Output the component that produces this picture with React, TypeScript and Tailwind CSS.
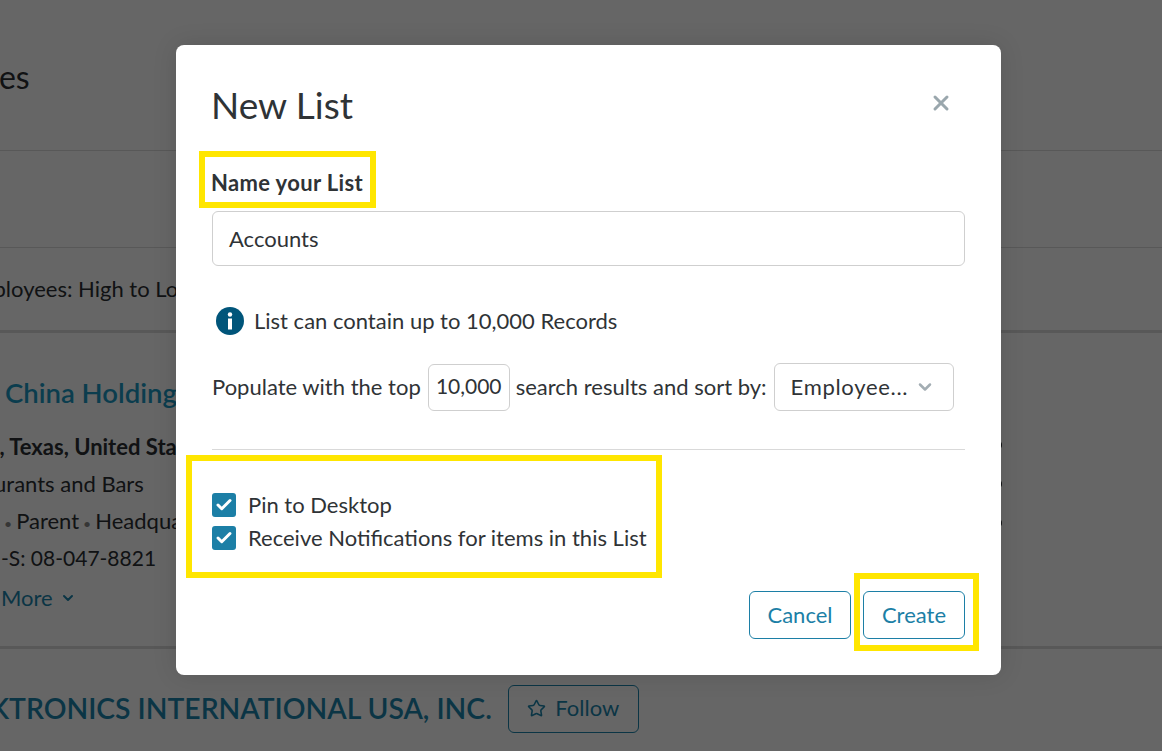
import { Check, ChevronDown, Star, X } from "lucide-react";

function Background() {
  return (
    <div className="h-[751px] overflow-hidden bg-white text-[#2b2f33] text-[22px]">
      <header className="h-[151px] border-b border-[#dcdcdc] pt-[52px]">
        <h1 className="-ml-[126px] text-[32px] leading-[50px]">Companies</h1>
      </header>
      <div className="h-[97px] border-b border-[#dcdcdc]"></div>
      <div className="h-[85px] border-b-[3px] border-[#dcdcdc] pt-[25px]">
        <p className="-ml-[37px] leading-[32px] whitespace-nowrap">Employees: High to Low</p>
      </div>
      <section className="h-[316px] border-b-[3px] border-[#dcdcdc] flex justify-between">
        <div className="pt-[42px]">
          <h2 className="ml-[5px] text-[27.5px] leading-[36px] font-semibold text-[#1c9ac4] whitespace-nowrap">China Holdings</h2>
          <p className="-ml-[60px] mt-[17px] leading-[37px] font-bold whitespace-nowrap">Dallas, Texas, United States</p>
          <p className="-ml-[59px] leading-[37px] whitespace-nowrap">Restaurants and Bars</p>
          <p className="leading-[37px] whitespace-nowrap">
            <span className="mx-[4px] text-[14px] leading-none text-[#888]">•</span>Parent<span className="mx-[4px] text-[14px] leading-none text-[#888]">•</span>Headquarters
          </p>
          <p className="-ml-[62px] text-[21px] leading-[37px] whitespace-nowrap">D-U-N-S: 08-047-8821</p>
          <p className="ml-[1px] mt-[3px] leading-[37px] text-[#1c86ad] flex items-center gap-[7px]">
            More <ChevronDown className="w-[16px] h-[16px]" strokeWidth={3} />
          </p>
        </div>
        <div className="pt-[108px] mr-[160px] flex flex-col gap-[31px]">
          <span className="w-[14px] h-[8px] rounded bg-[#2b2f33]"></span>
          <span className="w-[14px] h-[8px] rounded bg-[#2b2f33]"></span>
          <span className="w-[14px] h-[8px] rounded bg-[#2b2f33]"></span>
        </div>
      </section>
      <section className="flex items-start gap-4 pt-[36px]">
        <h2 className="-ml-[10px] text-[28.3px] leading-[46px] font-semibold text-[#1c86ad] whitespace-nowrap">KTRONICS INTERNATIONAL USA, INC.</h2>
        <button className="w-[131px] h-[48px] pb-[4px] rounded-md border border-[#1c86ad] text-[#1c86ad] flex items-center justify-center gap-[9px]">
          <Star className="w-[19px] h-[19px] mt-[3px]" strokeWidth={2} /> Follow
        </button>
      </section>
    </div>
  );
}

function CheckItem({ label }: { label: string }) {
  return (
    <label className="flex items-center h-[33px]">
      <span className="w-[24px] h-[24px] rounded-[3px] bg-[#1c7fa6] flex items-center justify-center">
        <Check className="w-[18px] h-[18px] text-white" strokeWidth={4} />
      </span>
      <span className="ml-[12px]">{label}</span>
    </label>
  );
}

function Highlight({ className }: { className: string }) {
  return <div className={`absolute border-[6px] border-[#ffe600] pointer-events-none ${className}`}></div>;
}

export default function App() {
  return (
    <div className="relative font-['Lato','Liberation_Sans',sans-serif]">
      <Background />
      <div className="absolute inset-0 bg-black/60 pt-[45px] pl-[176px]">
        <div className="relative w-[825px] h-[630px] bg-white rounded-lg shadow-[0_0_24px_rgba(0,0,0,0.12)] px-[36px] text-[#2f3336] text-[22px]">
          <div className="flex justify-between items-start pt-[35px]">
            <h1 className="-ml-px text-[37px] leading-[50px]">New List</h1>
            <X className="w-[24px] h-[24px] mt-[11px] mr-[12px] text-[#9aa7ad]" strokeWidth={3} />
          </div>
          <p className="mt-[38px] -ml-px font-bold leading-[30px] tracking-[0.35px]">Name your List</p>
          <div className="mt-[13px] h-[55px] border border-[#cfcfcf] rounded-md px-[16px] flex items-center">Accounts</div>
          <div className="mt-[40px] flex items-center h-[30px] pl-[4px]">
            <svg viewBox="0 0 28 28" className="w-[28px] h-[28px]">
              <circle cx="14" cy="14" r="14" fill="#00557a" />
              <circle cx="14" cy="7.5" r="2.2" fill="#fff" />
              <rect x="12" y="11.5" width="4" height="11" fill="#fff" />
            </svg>
            <span className="ml-[10px] pb-[2px]">List can contain up to 10,000 Records</span>
          </div>
          <div className="mt-[27px] flex items-center h-[48px] whitespace-nowrap">
            <span className="pb-[2px]">Populate with the top</span>
            <span className="ml-[7px] w-[82px] h-[47px] pb-[2px] text-[21px] border border-[#cfcfcf] rounded-md flex items-center justify-center">10,000</span>
            <span className="ml-[6px] pb-[2px]">search results and sort by:</span>
            <span className="ml-[7px] w-[180px] h-[48px] pb-[2px] border border-[#cfcfcf] rounded-md flex items-center pl-[16px]">
              <span className="tracking-[0.7px]">Employee...</span>
              <ChevronDown className="w-[20px] h-[20px] ml-[7px] mt-[2px] text-[#a3adb3]" strokeWidth={3} />
            </span>
          </div>
          <div className="mt-[38px] border-t border-[#d9d9d9]"></div>
          <div className="mt-[38px]">
            <CheckItem label="Pin to Desktop" />
            <CheckItem label="Receive Notifications for items in this List" />
          </div>
          <div className="mt-[37px] flex justify-end gap-[12px]">
            <button className="w-[102px] h-[48px] pb-[2px] rounded-md border border-[#1c7fa6] text-[#1c7fa6]">Cancel</button>
            <button className="w-[102px] h-[48px] pb-[2px] rounded-md border border-[#1c7fa6] text-[#1c7fa6]">Create</button>
          </div>
          <Highlight className="left-[23px] top-[106px] w-[177px] h-[57px]" />
          <Highlight className="left-[10px] top-[410px] w-[476px] h-[123px]" />
          <Highlight className="left-[678px] top-[528px] w-[125px] h-[78px]" />
        </div>
      </div>
    </div>
  );
}
